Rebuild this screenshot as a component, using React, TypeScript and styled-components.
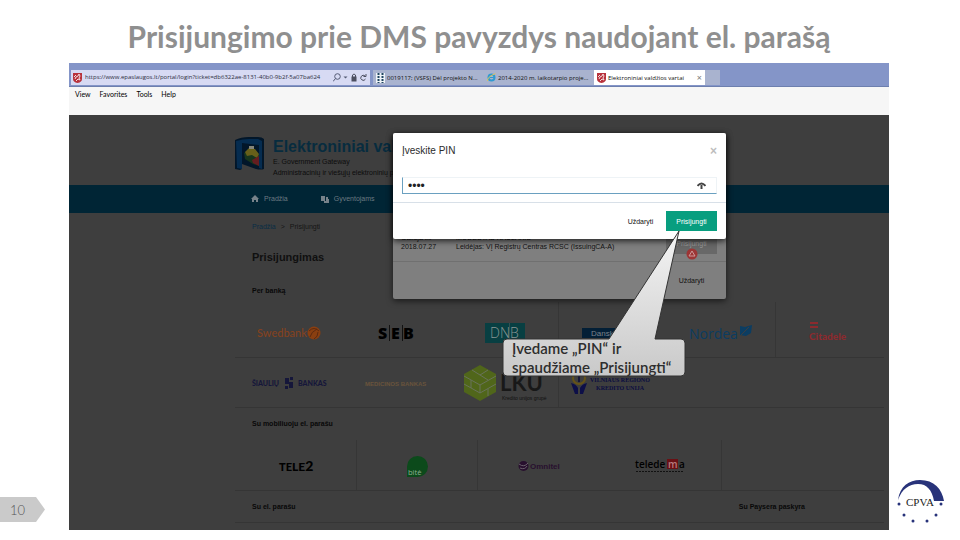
import React from "react";
import styled, { createGlobalStyle } from "styled-components";

const GlobalStyle = createGlobalStyle`
  *, *::before, *::after { box-sizing: border-box; }
  body { margin: 0; background: #fff; font-family: "Liberation Sans", Arial, sans-serif; }
  h1, h2, h3, p { margin: 0; }
  button, input { font-family: inherit; }
  a { color: inherit; text-decoration: none; }
`;

const Slide = styled.main`
  min-height: 100vh;
  display: flex;
  flex-direction: column;
  padding-bottom: 10px;
`;
const SlideTitle = styled.h1`
  height: 63px;
  padding: 15px 2px 0 0;
  text-align: center;
  font: 700 30px/42px Lato, sans-serif;
  color: #8f8f8f;
  white-space: nowrap;
`;
const SlideBody = styled.div`
  flex: 1;
  display: grid;
  grid-template-columns: 69px minmax(0, 1fr) 71px;
`;
const Gutter = styled.aside`
  display: flex;
  flex-direction: column;
  justify-content: flex-end;
  align-items: flex-start;
`;
const PageNumber = styled.div`
  width: 45px;
  height: 25px;
  margin-bottom: 8px;
  padding-left: 10px;
  background: #cacaca;
  clip-path: polygon(0 0, 80% 0, 100% 50%, 80% 100%, 0 100%);
  font: 300 13px/26px Lato, sans-serif;
  color: #555;
`;
const CornerLogo = styled.svg`
  width: 50px;
  height: 46px;
  margin: 0 0 5px 7px;
`;

/* Browser window */
const Browser = styled.section`
  display: flex;
  flex-direction: column;
  min-width: 0;
`;
const TabStrip = styled.div`
  height: 24px;
  padding: 7px 2px 1px;
  display: flex;
  background: #8495c8;
  border-bottom: 1px solid #6d7fae;
`;
const AddressBar = styled.label`
  width: 299px;
  display: flex;
  align-items: center;
  gap: 3px;
  padding: 0 3px 0 2px;
  background: #d7daf3;
`;
const AddressInput = styled.input`
  flex: 1;
  min-width: 0;
  padding: 0;
  border: 0;
  background: none;
  font: 500 6px/13px "Open Sans", sans-serif;
  color: #2c2e40;
  outline: none;
`;
const Tab = styled.button<{ $active?: boolean; $width: number; $gap?: number }>`
  width: ${(p) => p.$width}px;
  margin-left: ${(p) => p.$gap ?? 0}px;
  padding: 0 3px;
  border: 0;
  display: flex;
  align-items: center;
  gap: 2px;
  background: ${(p) => (p.$active ? "#fff" : "#a9b3cf")};
  font: 500 6px/14px "Open Sans", sans-serif;
  color: #111;
  white-space: nowrap;
  overflow: hidden;

  svg { flex-shrink: 0; }
`;
const TabClose = styled.span`
  margin-left: auto;
  color: #777;
  font-size: 9px;
`;
const MenuBar = styled.nav`
  height: 28px;
  padding: 0 6px;
  display: flex;
  gap: 9px;
  background: #f6f6f6;
`;
const MenuItem = styled.button`
  height: 14px;
  padding: 0;
  border: 0;
  background: none;
  font: 7px/13px Lato, sans-serif;
  color: #000;
`;

/* Web page */
const Page = styled.div`
  position: relative;
  flex: 1;
  display: flex;
  flex-direction: column;
  background: #3e3e3e;
  color: #151515;
`;
const Header = styled.header`
  height: 70px;
  padding: 22px 0 0 166px;
  display: flex;
  align-items: flex-start;
  gap: 8px;
`;
const HeaderText = styled.div`
  white-space: nowrap;
`;
const SiteName = styled.h2`
  font-size: 16px;
  line-height: 19px;
  color: #072c3f;
`;
const SiteLine = styled.p`
  font-size: 7px;
  line-height: 11px;
  color: #0c0c0c;
`;
const NavBar = styled.nav`
  height: 28px;
  padding-left: 182px;
  display: flex;
  align-items: center;
  gap: 33px;
  background: #002535;
`;
const NavLink = styled.a`
  display: flex;
  align-items: center;
  gap: 5px;
  font-size: 7px;
  line-height: 12px;
  color: #6b7a82;
`;
const Content = styled.div`
  flex: 1;
  margin: 0 5px 0 166px;
  display: flex;
  flex-direction: column;
`;
const Crumbs = styled.div`
  height: 27px;
  padding-left: 17px;
  display: flex;
  align-items: center;
  gap: 5px;
  font-size: 7px;
`;
const CrumbLink = styled.a`
  color: #082d45;
`;
const PageHeading = styled.h2`
  height: 40px;
  padding: 9px 0 0 17px;
  font-size: 11px;
  line-height: 16px;
  color: #101010;
`;
const SectionTitle = styled.h3<{ $height: number }>`
  height: ${(p) => p.$height}px;
  padding-left: 17px;
  display: flex;
  align-items: center;
  font-size: 7px;
  line-height: 10px;
  color: #080808;
`;
const LogoGrid = styled.div<{ $columns: string; $height: number; $top?: number }>`
  height: ${(p) => p.$height}px;
  display: grid;
  grid-template-columns: ${(p) => p.$columns};
  border-bottom: 1px solid #353535;

  a { padding-top: ${(p) => p.$top ?? 0}px; }
`;
const LogoCell = styled.a<{ $line?: boolean }>`
  display: flex;
  align-items: center;
  justify-content: center;
  border-right: 1px solid ${(p) => (p.$line ? "#363636" : "transparent")};
`;
const TitleRow = styled.div`
  display: grid;
  grid-template-columns: 3fr 1fr;
  border-bottom: 1px solid #353535;
`;

/* Dialogs */
const DialogLayer = styled.div`
  position: absolute;
  top: 18px;
  left: 324px;
  width: 333px;
  display: grid;
  align-items: start;
`;
const BackDialog = styled.section`
  grid-area: 1 / 1;
  height: 166px;
  display: flex;
  flex-direction: column;
  justify-content: flex-end;
  border-radius: 2px;
  background: #7f7f7f;
  box-shadow: 0 2px 6px rgba(0, 0, 0, 0.6);
  color: #111;
`;
const CertRow = styled.div`
  height: 31px;
  padding: 2px 9px 0 8px;
  display: grid;
  grid-template-columns: 55px 1fr 51px;
  border-bottom: 1px solid #707070;
  font-size: 7px;
  line-height: 9px;
  white-space: nowrap;
`;
const CertButton = styled.button`
  position: relative;
  height: 21px;
  padding: 0;
  border: 0;
  background: #686868;
  font-size: 7px;
  color: #9a9a9a;
`;
const Warning = styled.svg`
  position: absolute;
  left: 20px;
  top: 15px;
  width: 12px;
  height: 12px;
`;
const DialogFooter = styled.footer<{ $height: number }>`
  height: ${(p) => p.$height}px;
  padding-right: 9px;
  display: flex;
  align-items: center;
  justify-content: flex-end;
`;
const PinDialog = styled.form`
  grid-area: 1 / 1;
  z-index: 1;
  border-radius: 2px;
  background: #fff;
  box-shadow: 0 2px 6px rgba(0, 0, 0, 0.75);
  color: #2b2b2b;
`;
const PinHeader = styled.header`
  height: 44px;
  padding: 0 9px 9px;
  display: flex;
  align-items: center;
  justify-content: space-between;
  font-size: 10px;
`;
const CloseButton = styled.button`
  padding: 0;
  border: 0;
  background: none;
  font: 700 12px/12px "Liberation Sans", sans-serif;
  color: #bdbdbd;
`;
const PinField = styled.div`
  height: 17px;
  margin: 0 9px 8px;
  padding: 0 10px 0 5px;
  display: flex;
  align-items: center;
  border: 1px solid #eef3f6;
  border-left-color: #6aa0c0;
  border-bottom-color: #6aa0c0;
`;
const PinInput = styled.input`
  flex: 1;
  min-width: 0;
  padding: 0;
  border: 0;
  outline: none;
  background: none;
  font-size: 12px;
  line-height: 14px;
  color: #222;
`;
const IconButton = styled.button`
  padding: 0;
  border: 0;
  background: none;
  display: flex;
`;
const DialogButton = styled.button<{ $primary?: boolean }>`
  width: 51px;
  height: 20px;
  padding: 0;
  border: 0;
  background: ${(p) => (p.$primary ? "#089e7f" : "transparent")};
  color: ${(p) => (p.$primary ? "#fff" : "#111")};
  font-size: 7px;
`;
const PinFooter = styled(DialogFooter)`
  border-top: 1px solid #d8e0e8;
`;

/* Callout */
const Callout = styled.div`
  position: absolute;
  z-index: 2;
  left: 109px;
  top: 96px;
  width: 185px;
  height: 149px;
  padding: 110px 0 0 10px;
  font: 600 15px/19px Lato, sans-serif;
  color: #2e2e2e;
  white-space: nowrap;
`;
const CalloutShape = styled.svg`
  position: absolute;
  inset: 0;
  z-index: -1;
`;

const Crest = () => (
  <svg width="9" height="10" viewBox="0 0 9 10">
    <path d="M0 0h9v6q0 3-4.500 4Q0 9 0 6z" fill="#b8323c" />
    <path d="M2 6l1-2 2-1 1-2 1 2-1 2 1 2-2-1-2 2M1 4l2-2" stroke="#f4dede" fill="none" />
  </svg>
);
const SearchIcon = () => (
  <svg width="15" height="9" viewBox="0 0 15 9" fill="none" stroke="#555b75">
    <circle cx="4.500" cy="3.500" r="2.800" />
    <path d="M2.500 5.500L0 8.500" />
    <path d="M10.500 3.500h4l-2 2z" fill="#555b75" stroke="none" />
  </svg>
);
const LockIcon = () => (
  <svg width="16" height="9" viewBox="0 0 16 9" fill="none" stroke="#4c4f60">
    <rect x="1" y="4" width="4" height="4" fill="#4c4f60" />
    <path d="M1.500 4V2q1.500-2 3 0v2" />
    <path d="M14.500 6A2.500 2.500 0 1 1 14 3M15 1v2.500h-2.500" />
  </svg>
);
const DotsIcon = () => (
  <svg width="9" height="10" viewBox="0 0 9 10">
    <rect width="9" height="10" fill="#eef3f8" />
    <path d="M2.500 0v10M6.500 0v10" stroke="#1e4560" strokeWidth="2" strokeDasharray="2 1" />
  </svg>
);
const ExplorerIcon = () => (
  <svg width="9" height="9" viewBox="0 0 9 9" fill="none">
    <circle cx="4.500" cy="4.500" r="3" stroke="#2f9ad0" strokeWidth="2" />
    <path d="M2 4.500h5" stroke="#2f9ad0" />
    <path d="M.5 8Q0 4 8.500.5" stroke="#dcc65b" />
  </svg>
);
const GatewayLogo = () => (
  <svg width="30" height="35" viewBox="0 0 30 35">
    <path d="M0 3Q6 0 14 0h9q4 0 6 2v30q-3 1-8 0L7 27v5l-2 1-5-1z" fill="#021629" />
    <path d="M1 4q7-2 13-2h9l4 2v28l-3-1V8L7 6v26l-5-1z" fill="#052c50" />
    <path d="M9 16l5-3 6 1 4 4v11l-6-2-8-5z" fill="#17361d" />
    <path d="M10 15l4-4 6 1 4 5-2 4-5-3-5 1z" fill="#67601a" />
    <path d="M17 23l7-4v10l-6-3z" fill="#641d20" />
    <path d="M14 9h5v3h-5z" fill="#85857a" />
  </svg>
);
const HomeIcon = () => (
  <svg width="8" height="8" viewBox="0 0 8 8" fill="#77828a">
    <path d="M0 4l4-4 4 4H7v3H5V5H3v2H1V4z" />
  </svg>
);
const PeopleIcon = () => (
  <svg width="8" height="7" viewBox="0 0 8 7" fill="#77828a">
    <path d="M0 0h4v5H0z" />
    <path d="M5 1h2v2h1v4H3V5h2z" />
  </svg>
);
const EyeIcon = () => (
  <svg width="9" height="7" viewBox="0 0 9 7" fill="none" stroke="#444">
    <path d="M.5 4Q4.500-1 8.500 4" strokeWidth="2" />
    <path d="M4.500 3v4" strokeWidth="2" />
  </svg>
);

const Wordmark = styled.svg`
  display: block;
  overflow: visible;
  flex-shrink: 0;
  font-family: "Liberation Sans", sans-serif;
`;
const Swedbank = () => (
  <Wordmark width="64" height="16">
    <text x="0" y="12" fontFamily="Lato" fontSize="11" fontWeight="500" fill="#84421f">Swedbank</text>
    <circle cx="57" cy="8" r="6.500" fill="#8a3f10" />
    <path d="M52 6q5-5 10 0M53 12q1-5 7-8M57 14q4-2 4-7" stroke="#5c2a10" fill="none" />
  </Wordmark>
);
const Seb = () => (
  <Wordmark width="37" height="16">
    <text y="14" fontFamily="Open Sans" fontSize="16" fontWeight="800" fill="#000">
      <tspan x="0">S</tspan><tspan x="13">E</tspan><tspan x="25">B</tspan>
    </text>
    <path d="M11.500 0v16M24.500 0v16" stroke="#111" />
  </Wordmark>
);
const Dnb = () => (
  <Wordmark width="40" height="20">
    <rect width="40" height="20" fill="#083f42" />
    <text x="5" y="15" fontSize="14" fontFamily="Open Sans" fontWeight="300" fill="#8a9694">DNB</text>
    <path d="M24.500 0v20" stroke="#315154" />
  </Wordmark>
);
const Danske = () => (
  <Wordmark width="62" height="16">
    <rect y="3" width="62" height="10" fill="#031f36" />
    <text x="9" y="11" fontSize="8" fill="#7b838b">Danske Bank</text>
  </Wordmark>
);
const Nordea = () => (
  <Wordmark width="64" height="20">
    <text x="0" y="16" fontFamily="Open Sans" fontSize="14" fontWeight="500" fill="#0b3d62">Nordea</text>
    <path d="M51 3l5 1 7-2-1 8-5 3-6-1z" fill="#0b3d62" />
    <path d="M52 12l8-8" stroke="#3e3e3e" />
  </Wordmark>
);
const Citadele = () => (
  <Wordmark width="40" height="22">
    <path d="M1 1h8M1 5h8" stroke="#8c2a2e" strokeWidth="2" />
    <text x="0" y="18" fontFamily="Lato" fontSize="10" fontWeight="900" fill="#8c2a2e">Citadele</text>
  </Wordmark>
);
const Siauliu = () => (
  <Wordmark width="74" height="14">
    <text x="0" y="10" fontFamily="Lato" fontSize="7" fontWeight="900" fill="#15163a">ŠIAULIŲ</text>
    <path d="M33 2h4v4h4v6h-4V8h-4zM38 1h3v3h-3zM33 10h3v3h-3z" fill="#15163a" />
    <text x="46" y="10" fontFamily="Lato" fontSize="7" fontWeight="900" fill="#15163a">BANKAS</text>
  </Wordmark>
);
const Medicinos = () => (
  <Wordmark width="64" height="12">
    <text x="0" y="9" fontSize="6" fontWeight="700" fill="#6a543c">MEDICINOS BANKAS</text>
  </Wordmark>
);
const Lku = () => (
  <Wordmark width="84" height="38">
    <path d="M17 1l16 9v18l-16 9-16-9V10z" fill="#50661a" />
    <path d="M1 12l16 9 16-9M1 20l16 9 16-9M9 6l16 10M17 21v8M8 16v8M25 25v7M17 11l8-5" stroke="#69735a" fill="none" />
    <text x="37" y="27" fontFamily="Lato" fontSize="22" fontWeight="700" fill="#181818">LKU</text>
    <text x="39" y="36" fontSize="5" fill="#111">Kredito unijos grupė</text>
  </Wordmark>
);
const Vilniaus = () => (
  <Wordmark width="84" height="26">
    <circle cx="8" cy="8" r="6" fill="none" stroke="#655318" strokeWidth="2" />
    <path d="M8 4v8" stroke="#161738" strokeWidth="2" />
    <path d="M0 13q5 1 7 5v6H4zM16 13q-5 1-7 5v6h3z" fill="#0d0f48" />
    <text x="19" y="12" fontFamily="Liberation Serif" fontSize="6" fontWeight="700" fill="#0b0d40">VILNIAUS REGIONO</text>
    <text x="25" y="20" fontFamily="Liberation Serif" fontSize="6" fontWeight="700" fill="#0b0d40">KREDITO UNIJA</text>
  </Wordmark>
);
const Tele2 = () => (
  <Wordmark width="32" height="14">
    <text x="0" y="12" fontFamily="Lato" fontWeight="900" fill="#000" fontSize="11">
      TE<tspan fontSize="12">LE</tspan><tspan fontSize="14">2</tspan>
    </text>
  </Wordmark>
);
const Bite = () => (
  <Wordmark width="21" height="21" viewBox="0 0 22 22">
    <path d="M0 11A11 11 0 1 1 11 22H0z" fill="#0c4a1b" />
    <text x="1" y="20" fontFamily="Open Sans" fontSize="8" fill="#8fae93">bitė</text>
  </Wordmark>
);
const Omnitel = () => (
  <Wordmark width="42" height="14">
    <circle cx="5.500" cy="7" r="5" fill="#28102e" />
    <path d="M1 5q5 4 9-1M2 9q5 2 7-2" stroke="#69606b" fill="none" />
    <text x="12" y="10" fontSize="8" fontWeight="700" fill="#28102e">Omnitel</text>
  </Wordmark>
);
const Teledema = () => (
  <Wordmark width="50" height="16">
    <rect x="32" y="1" width="11" height="10" fill="#6a1014" />
    <text y="10" fontSize="10" fontFamily="Open Sans" fontWeight="600" fill="#000">
      <tspan x="0">telede</tspan><tspan x="33" fill="#b87c7f">m</tspan><tspan x="44">a</tspan>
    </text>
    <path d="M1 13.500h48" stroke="#111" strokeDasharray="2 1" />
  </Wordmark>
);

export default function App() {
  return (
    <>
      <GlobalStyle />
      <Slide>
        <SlideTitle>Prisijungimo prie DMS pavyzdys naudojant el. parašą</SlideTitle>
        <SlideBody>
          <Gutter><PageNumber>10</PageNumber></Gutter>
          <Browser>
            <TabStrip>
              <AddressBar>
                <Crest />
                <AddressInput aria-label="Adresas" defaultValue="https://www.epaslaugos.lt/portal/login?ticket=db6322ae-8131-40b0-9b2f-5a07ba624" />
                <SearchIcon />
                <LockIcon />
              </AddressBar>
              <Tab type="button" $width={111} $gap={3}><DotsIcon />0019117; (VSFS) Dėl projekto N...</Tab>
              <Tab type="button" $width={110}><ExplorerIcon />2014-2020 m. laikotarpio proje...</Tab>
              <Tab type="button" $width={111} $active><Crest />Elektroniniai valdžios vartai<TabClose>×</TabClose></Tab>
              <Tab type="button" $width={15} aria-label="Naujas skirtukas" />
            </TabStrip>
            <MenuBar>
              <MenuItem>View</MenuItem>
              <MenuItem>Favorites</MenuItem>
              <MenuItem>Tools</MenuItem>
              <MenuItem>Help</MenuItem>
            </MenuBar>
            <Page>
              <Header>
                <GatewayLogo />
                <HeaderText>
                  <SiteName>Elektroniniai valdžios vartai</SiteName>
                  <SiteLine>E. Government Gateway</SiteLine>
                  <SiteLine>Administracinių ir viešųjų elektroninių paslaugų</SiteLine>
                </HeaderText>
              </Header>
              <NavBar>
                <NavLink href="#home"><HomeIcon />Pradžia</NavLink>
                <NavLink href="#people"><PeopleIcon />Gyventojams</NavLink>
              </NavBar>
              <Content>
                <Crumbs><CrumbLink href="#home">Pradžia</CrumbLink><span>&gt;</span><span>Prisijungti</span></Crumbs>
                <PageHeading>Prisijungimas</PageHeading>
                <SectionTitle $height={22}>Per banką</SectionTitle>
                <LogoGrid $columns="repeat(6, 1fr)" $height={56} $top={6}>
                  <LogoCell href="#swedbank"><Swedbank /></LogoCell>
                  <LogoCell href="#seb"><Seb /></LogoCell>
                  <LogoCell href="#dnb" $line><Dnb /></LogoCell>
                  <LogoCell href="#danske"><Danske /></LogoCell>
                  <LogoCell href="#nordea" $line><Nordea /></LogoCell>
                  <LogoCell href="#citadele"><Citadele /></LogoCell>
                </LogoGrid>
                <LogoGrid $columns="repeat(6, 1fr)" $height={50}>
                  <LogoCell href="#siauliu"><Siauliu /></LogoCell>
                  <LogoCell href="#medicinos"><Medicinos /></LogoCell>
                  <LogoCell href="#lku" $line><Lku /></LogoCell>
                  <LogoCell href="#vilniaus"><Vilniaus /></LogoCell>
                </LogoGrid>
                <SectionTitle $height={32}>Su mobiliuoju el. parašu</SectionTitle>
                <LogoGrid $columns="3fr 3fr 3fr 3fr 4fr" $height={51} $top={2}>
                  <LogoCell href="#tele2" $line><Tele2 /></LogoCell>
                  <LogoCell href="#bite" $line><Bite /></LogoCell>
                  <LogoCell href="#omnitel"><Omnitel /></LogoCell>
                  <LogoCell href="#teledema" $line><Teledema /></LogoCell>
                </LogoGrid>
                <TitleRow>
                  <SectionTitle $height={31}>Su el. parašu</SectionTitle>
                  <SectionTitle $height={31}>Su Paysera paskyra</SectionTitle>
                </TitleRow>
              </Content>
              <DialogLayer>
                <BackDialog>
                  <CertRow>
                    <div>Galioja iki<br />2018.07.27</div>
                    <div>MODESTAS KAULAKIS<br />Leidėjas: VĮ Registrų Centras RCSC (IssuingCA-A)</div>
                    <CertButton type="button">
                      Prisijungti
                      <Warning viewBox="0 0 12 12">
                        <circle cx="6" cy="6" r="5.500" fill="#9d3535" />
                        <path d="M6 3l3 5H3z" fill="none" stroke="#c99" />
                      </Warning>
                    </CertButton>
                  </CertRow>
                  <DialogFooter $height={37}><DialogButton type="button">Uždaryti</DialogButton></DialogFooter>
                </BackDialog>
                <PinDialog onSubmit={(e) => e.preventDefault()}>
                  <PinHeader>
                    <label htmlFor="pin">Įveskite PIN</label>
                    <CloseButton type="button" aria-label="Uždaryti langą">×</CloseButton>
                  </PinHeader>
                  <PinField>
                    <PinInput id="pin" type="password" defaultValue="1234" />
                    <IconButton type="button" aria-label="Rodyti PIN"><EyeIcon /></IconButton>
                  </PinField>
                  <PinFooter $height={37}>
                    <DialogButton type="button">Uždaryti</DialogButton>
                    <DialogButton $primary>Prisijungti</DialogButton>
                  </PinFooter>
                </PinDialog>
                <Callout>
                  <CalloutShape width="185" height="149" viewBox="0 0 185 149">
                    <defs>
                      <linearGradient id="paper" x1="0" y1="0" x2="0" y2="1">
                        <stop offset="0" stopColor="#f4f4f4" />
                        <stop offset="1" stopColor="#c9c9c9" />
                      </linearGradient>
                    </defs>
                    <path d="M177 2L153 110H179Q183 110 183 114V143Q183 147 179 147H5Q1 147 1 143V114Q1 110 5 110H107Z" fill="url(#paper)" stroke="#333" />
                  </CalloutShape>
                  Įvedame „PIN“ ir<br />spaudžiame „Prisijungti“
                </Callout>
              </DialogLayer>
            </Page>
          </Browser>
          <Gutter>
            <CornerLogo viewBox="0 0 50 46" role="img" aria-label="CPVA">
              <path d="M2 21C4 7 13 1 24 1 38 1 46 10 48 22H38C36 11 31 5 22 5 13 5 6 10 2 21Z" fill="#28337a" />
              <text x="10" y="27" fontFamily="Liberation Serif" fontSize="11" fill="#222">CPVA</text>
              <g fill="#28337a">
                <circle cx="3" cy="25" r="1.500" /><circle cx="8" cy="36" r="1.500" />
                <circle cx="17" cy="42" r="1.500" /><circle cx="31" cy="42" r="1.500" />
                <circle cx="40" cy="36" r="1.500" /><circle cx="45" cy="25" r="1.500" />
              </g>
            </CornerLogo>
          </Gutter>
        </SlideBody>
      </Slide>
    </>
  );
}
